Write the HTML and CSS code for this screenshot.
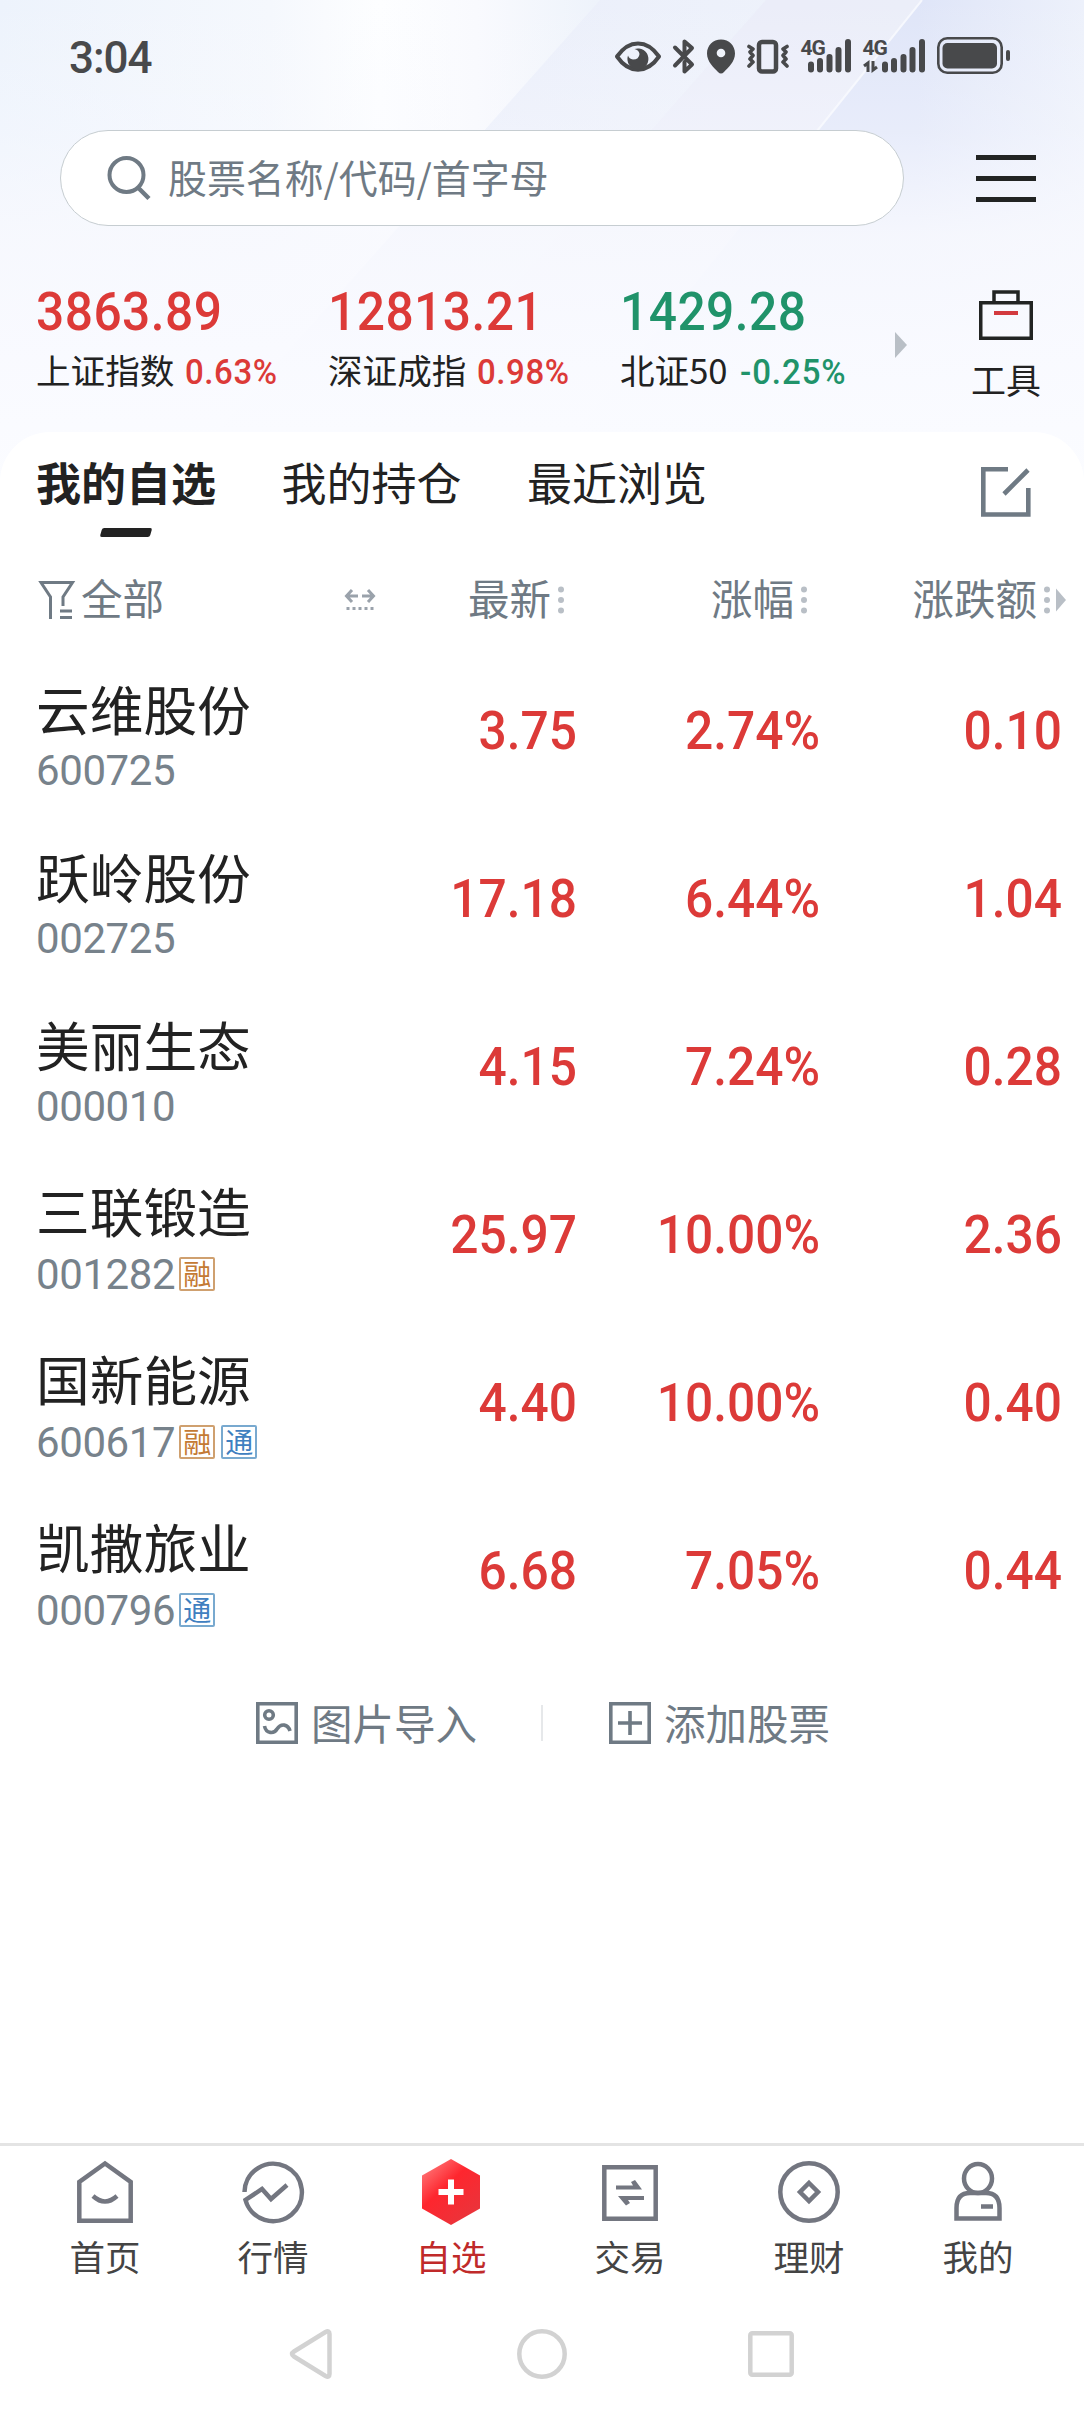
FILE: index.html
```
<!DOCTYPE html>
<html lang="zh-CN">
<head>
    <meta charset="UTF-8">
    <meta name="viewport" content="width=device-width, initial-scale=1.0">
    <title>我的自选</title>
    <link rel="stylesheet" href="styles.css">
</head>
<body>
    <div class="app">
        <header class="header">
            <svg class="header-bg" viewBox="0 0 1084 480" preserveAspectRatio="none">
                <defs>
                    <linearGradient id="base" x1="0" y1="0" x2="1" y2="0">
                        <stop offset="0" stop-color="#edf3fc"/>
                        <stop offset="0.25" stop-color="#f5f8fd"/>
                        <stop offset="0.35" stop-color="#fdfeff"/>
                        <stop offset="0.44" stop-color="#f9fafe"/>
                        <stop offset="0.55" stop-color="#eef3fb"/>
                        <stop offset="1" stop-color="#ebeffb"/>
                    </linearGradient>
                    <linearGradient id="beam" x1="0" y1="0" x2="1" y2="0">
                        <stop offset="0" stop-color="#e7ebf9"/>
                        <stop offset="1" stop-color="#f1f5fc"/>
                    </linearGradient>
                    <linearGradient id="beam2" x1="0" y1="0" x2="1" y2="0">
                        <stop offset="0" stop-color="#dfe5f8"/>
                        <stop offset="0.7" stop-color="#dfe5f8"/>
                        <stop offset="1" stop-color="#edf1fb"/>
                    </linearGradient>
                    <linearGradient id="fade" x1="0" y1="0" x2="0" y2="1">
                        <stop offset="0" stop-color="#f9faff" stop-opacity="0"/>
                        <stop offset="0.27" stop-color="#f9faff" stop-opacity="0.35"/>
                        <stop offset="0.48" stop-color="#f8f9fe" stop-opacity="0.88"/>
                        <stop offset="0.7" stop-color="#f9faff" stop-opacity="0.97"/>
                        <stop offset="1" stop-color="#fbfcff"/>
                    </linearGradient>
                </defs>
                <rect width="1084" height="480" fill="url(#base)"/>
                <path d="M600 0H1084V480H165Z" fill="url(#beam)"/>
                <path d="M766 0H922L530 480H335Z" fill="#e9ebf8" opacity=".7"/>
                <path d="M922 0H1084V480H530Z" fill="url(#beam2)"/>
                <path d="M922 0L814 132" stroke="#f6f8fe" stroke-width="2"/>
                <rect width="1084" height="480" fill="url(#fade)"/>
            </svg>

            <div class="status-bar">
                <span class="time">3:04</span>
                <svg class="status-icons" width="400" height="40" viewBox="612 36 400 40">
                    <!-- eye -->
                    <path d="M617 56.500C629 39 647 39 659 56.500C647 74 629 74 617 56.500Z" fill="none" stroke="#48494b" stroke-width="4" stroke-linejoin="round"/>
                    <path d="M634.500 49A10.500 10.500 0 1 1 628 55.500Q629 59 633 59.500Q639 59.500 639.500 54Q639 50 634.500 49Z" fill="#48494b"/>
                    <!-- bluetooth -->
                    <path d="M675 47.500L692 64.500L684.500 71.500V62M675 65.500L692 48L684.500 41.500V54" fill="none" stroke="#48494b" stroke-width="4" stroke-linecap="round" stroke-linejoin="round"/>
                    <!-- location -->
                    <path d="M721 39.500C713 39.500 707 45.500 707 53.500C707 62 714 67.500 718 72Q721 75 724 72C728 67.500 735 62 735 53.500C735 45.500 729 39.500 721 39.500Z" fill="#48494b"/>
                    <circle cx="721" cy="53" r="4.300" fill="#f0f4fc"/>
                    <!-- vibrate -->
                    <rect x="759" y="42" width="17" height="29.500" rx="3" fill="none" stroke="#48494b" stroke-width="4.500"/>
                    <path d="M749 46.500L753 49L750 52L753 55.500L750 59L753 62L749 66M787 46.500L783 49L786 52L783 55.500L786 59L783 62L787 66" fill="none" stroke="#48494b" stroke-width="3.600" stroke-linecap="round" stroke-linejoin="round"/>
                    <!-- signals -->
                    <text class="net" x="800.500" y="55">4G</text>
                    <path d="M811 64.500V69.500M820 61V69.500M829.500 57V69.500M838.500 50V69.500M848 42V69.500" stroke="#48494b" stroke-width="6" stroke-linecap="round"/>
                    <text class="net" x="862.500" y="55">4G</text>
                    <path d="M864 66L868 63V72M873 61V70L877 67" fill="none" stroke="#48494b" stroke-width="3"/>
                    <path d="M885 64.500V69.500M894 61V69.500M903.500 57V69.500M912.500 50V69.500M922 42V69.500" stroke="#48494b" stroke-width="6" stroke-linecap="round"/>
                    <!-- battery -->
                    <rect x="938.300" y="38.300" width="63.400" height="34.400" rx="9" fill="none" stroke="#48494b" stroke-width="2.600"/>
                    <rect x="942.500" y="43" width="54.500" height="25.500" rx="5" fill="#48494b"/>
                    <rect x="1006" y="50" width="4" height="11" rx="2" fill="#48494b"/>
                </svg>
            </div>

            <div class="search-row">
                <div class="search-box">
                    <svg width="46" height="46" viewBox="106 155 46 46" fill="none" stroke="#6f7a84">
                        <circle cx="126.500" cy="175" r="17" stroke-width="4"/>
                        <path d="M138 187.500L149 198.500" stroke-width="4.500"/>
                    </svg>
                    <span class="placeholder">股票名称/代码/首字母</span>
                </div>
                <div class="menu"><i></i><i></i><i></i></div>
            </div>

            <div class="indexes">
                <div class="index up">
                    <div class="index-value">3863.89</div>
                    <div class="index-name">上证指数 <span class="index-rate">0.63%</span></div>
                </div>
                <div class="index up">
                    <div class="index-value">12813.21</div>
                    <div class="index-name">深证成指 <span class="index-rate">0.98%</span></div>
                </div>
                <div class="index down">
                    <div class="index-value">1429.28</div>
                    <div class="index-name">北证50 <span class="index-rate">-0.25%</span></div>
                </div>
                <svg class="index-more" width="12" height="26" viewBox="0 0 12 26"><path d="M0 0L12 13L0 26Z" fill="#b9bfc6"/></svg>
                <div class="tools">
                    <svg width="54" height="50" viewBox="0 0 54 50" fill="none" stroke="#222423" stroke-width="3.500">
                        <path d="M1.750 12.750H52.250V48.250H1.750ZM15 12V2H39V12"/>
                        <path d="M15 23H39" stroke="#d33a3f" stroke-width="4"/>
                    </svg>
                    <span>工具</span>
                </div>
            </div>
        </header>

        <main class="panel">
            <div class="tabs">
                <div class="tab active">我的自选</div>
                <div class="tab">我的持仓</div>
                <div class="tab">最近浏览</div>
                <svg class="edit" width="50" height="50" viewBox="0 0 50 50" fill="none" stroke="#6f7a84" stroke-width="4.600">
                    <path d="M27 2.300H2.300V47.500H47.300V21M47 3L23 27"/>
                </svg>
            </div>

            <div class="row head">
                <div class="filter">
                    <svg width="40" height="40" viewBox="36 581 40 40" fill="none" stroke="#6f7a84" stroke-width="3">
                        <path d="M50.500 620V598L41 583.500H72.500L63 598V607"/>
                        <path d="M60 612H72M60 618.500H72"/>
                    </svg>
                    <span>全部</span>
                    <svg class="resize" width="32" height="24" viewBox="344 589 32 24" fill="none" stroke="#9aa2ab" stroke-width="3">
                        <path d="M358 597H347M352 591L346.500 597L352 603M362 597H373M368 591L373.500 597L368 603"/>
                        <path d="M346.500 609.500H375" stroke-dasharray="3 3"/>
                    </svg>
                </div>
                <div class="cell"><span>最新</span><svg class="dots" width="6" height="28" viewBox="0 0 6 28"><circle cx="3" cy="3.500" r="3"/><circle cx="3" cy="14" r="3"/><circle cx="3" cy="24.500" r="3"/></svg></div>
                <div class="cell"><span>涨幅</span><svg class="dots" width="6" height="28" viewBox="0 0 6 28"><circle cx="3" cy="3.500" r="3"/><circle cx="3" cy="14" r="3"/><circle cx="3" cy="24.500" r="3"/></svg></div>
                <div class="cell last"><span>涨跌额</span><svg class="dots" width="6" height="28" viewBox="0 0 6 28"><circle cx="3" cy="3.500" r="3"/><circle cx="3" cy="14" r="3"/><circle cx="3" cy="24.500" r="3"/></svg><svg class="more" width="10" height="24" viewBox="0 0 10 24"><path d="M0 0.500L10 12L0 23.500Z"/></svg></div>
            </div>

            <div class="row">
                <div class="stock"><div class="name">云维股份</div><div class="code">600725</div></div>
                <div class="num">3.75</div><div class="num">2.74%</div><div class="num">0.10</div>
            </div>
            <div class="row">
                <div class="stock"><div class="name">跃岭股份</div><div class="code">002725</div></div>
                <div class="num">17.18</div><div class="num">6.44%</div><div class="num">1.04</div>
            </div>
            <div class="row">
                <div class="stock"><div class="name">美丽生态</div><div class="code">000010</div></div>
                <div class="num">4.15</div><div class="num">7.24%</div><div class="num">0.28</div>
            </div>
            <div class="row tagged">
                <div class="stock"><div class="name">三联锻造</div><div class="code">001282<span class="tag rong">融</span></div></div>
                <div class="num">25.97</div><div class="num">10.00%</div><div class="num">2.36</div>
            </div>
            <div class="row tagged">
                <div class="stock"><div class="name">国新能源</div><div class="code">600617<span class="tag rong">融</span><span class="tag tong">通</span></div></div>
                <div class="num">4.40</div><div class="num">10.00%</div><div class="num">0.40</div>
            </div>
            <div class="row tagged">
                <div class="stock"><div class="name">凯撒旅业</div><div class="code">000796<span class="tag tong">通</span></div></div>
                <div class="num">6.68</div><div class="num">7.05%</div><div class="num">0.44</div>
            </div>

            <div class="actions">
                <div class="action">
                    <svg width="42" height="42" viewBox="0 0 42 42" fill="none" stroke="#6f7a84" stroke-width="3.600">
                        <path d="M1.800 1.800H40.200V40.200H1.800Z"/>
                        <circle cx="13" cy="13" r="4.300"/>
                        <path d="M8.500 24C10 32 18 32 21 27C25 21 32 22 34 29"/>
                    </svg>
                    <span>图片导入</span>
                </div>
                <div class="action-line"></div>
                <div class="action">
                    <svg width="42" height="42" viewBox="0 0 42 42" fill="none" stroke="#6f7a84" stroke-width="3.600">
                        <path d="M1.800 1.800H40.200V40.200H1.800ZM9 21H33M21 9V33"/>
                    </svg>
                    <span>添加股票</span>
                </div>
            </div>
        </main>

        <nav class="navbar">
            <div class="nav-item">
                <svg width="66" height="66" viewBox="-33 -33 66 66">
                    <path d="M-25.700 28.700V-10L0 -28.500L25.700 -10V28.700Z"/>
                    <path d="M-12 4Q0 15 12 4"/>
                </svg>
                <span>首页</span>
            </div>
            <div class="nav-item">
                <svg width="66" height="66" viewBox="-33 -33 66 66">
                    <path d="M-28.500 0A28.700 28.700 0 1 1 -27.500 8L-11 -3L-2 7L14 -7"/>
                </svg>
                <span>行情</span>
            </div>
            <div class="nav-item active">
                <svg width="66" height="66" viewBox="-33 -33 66 66">
                    <defs>
                        <linearGradient id="hex" x1="0" y1="0" x2="0.800" y2="1">
                            <stop offset="0" stop-color="#ff8a8a"/>
                            <stop offset="0.450" stop-color="#fe262e"/>
                            <stop offset="1" stop-color="#e8353c"/>
                        </linearGradient>
                    </defs>
                    <path class="hex" d="M0 -33L29 -16.500V16.500L0 33L-29 16.500V-16.500Z"/>
                    <path class="plus" d="M0 -12.500V12.500M-12.500 0H12.500"/>
                </svg>
                <span>自选</span>
            </div>
            <div class="nav-item">
                <svg width="66" height="66" viewBox="-33 -33 66 66">
                    <path d="M-25.700 -24.700H25.700V26.700H-25.700Z"/>
                    <path class="solid" d="M-14 -6.500H3L1 -10L5 -12L12 -2.500H-14ZM14 8H-2L0 11L-4 13.500L-12 4H14Z"/>
                </svg>
                <span>交易</span>
            </div>
            <div class="nav-item">
                <svg width="66" height="66" viewBox="-33 -33 66 66">
                    <circle r="28.700"/>
                    <path d="M0 -9L9 0L0 9L-9 0Z"/>
                </svg>
                <span>理财</span>
            </div>
            <div class="nav-item">
                <svg width="66" height="66" viewBox="-33 -33 66 66">
                    <ellipse cx="0" cy="-13.500" rx="14" ry="14.500"/>
                    <path d="M-21.500 26.500V16Q-21.500 1 -8 1H8Q21.500 1 21.500 16V26.500Z"/>
                    <path d="M3 14.500H15"/>
                </svg>
                <span>我的</span>
            </div>
        </nav>

        <div class="system-nav">
            <svg width="50" height="50" viewBox="0 0 50 50"><path d="M6 22.500Q2 25 6 27.500L37.500 47Q41.500 49 41.500 45V5Q41.500 1 37.500 3Z"/></svg>
            <svg width="50" height="50" viewBox="0 0 50 50"><circle cx="25" cy="25" r="22.700"/></svg>
            <svg width="50" height="50" viewBox="0 0 50 50"><rect x="4.300" y="4.300" width="41.400" height="41.400" rx="2"/></svg>
        </div>
    </div>
</body>
</html>
```

FILE: styles.css
```
* {
    box-sizing: border-box;
}

body {
    margin: 0;
    background: #fff;
    color: #222;
    font-family: "Noto Sans CJK SC", sans-serif;
}

svg {
    display: block;
    flex: none;
}

.app {
    width: 1084px;
    height: 2412px;
    display: flex;
    flex-direction: column;
    overflow: hidden;
}

/* Header */
.header {
    position: relative;
    height: 432px;
    flex: none;
}

.header-bg {
    position: absolute;
    top: 0;
    left: 0;
    width: 1084px;
    height: 490px;
    z-index: -1;
}

.status-bar {
    display: flex;
    justify-content: space-between;
    padding: 36px 72px 0 69px;
    height: 130px;
}

.time {
    font-family: Roboto, sans-serif;
    font-size: 44px;
    line-height: 44px;
    letter-spacing: -1px;
    font-weight: 500;
    color: #48494b;
}

.net {
    font-family: Roboto, sans-serif;
    font-size: 21px;
    font-weight: 700;
    letter-spacing: -1px;
    fill: #48494b;
}

.search-row {
    display: flex;
    align-items: center;
    justify-content: space-between;
    height: 96px;
    padding: 0 48px 0 60px;
}

.search-box {
    display: flex;
    align-items: center;
    width: 844px;
    height: 96px;
    padding-left: 45px;
    border: 1px solid #c6cdd1;
    border-radius: 48px;
    background: #fff;
}

.placeholder {
    margin: 0 0 4px 16px;
    font-size: 38.900px;
    line-height: 56px;
    color: #6f7a84;
}

.menu {
    display: flex;
    flex-direction: column;
    gap: 16px;
    width: 60px;
}

.menu i {
    height: 5px;
    background: #222423;
}

.indexes {
    display: flex;
    padding: 56px 44px 0 36px;
}

.index {
    width: 292px;
    white-space: nowrap;
}

/* Quotes use a slightly condensed face */
.index-value,
.num {
    font-family: Roboto, sans-serif;
    font-size: 54px;
    line-height: 60px;
    font-weight: 500;
    letter-spacing: 0.500px;
    transform: scaleX(0.92);
    transform-origin: left;
}

.index-name {
    font-size: 34.600px;
    line-height: 52px;
    margin-top: 1px;
}

.index-rate {
    display: inline-block;
    margin-left: 3px;
    font-family: Roboto, sans-serif;
    font-size: 35.500px;
    font-weight: 500;
    letter-spacing: 0.600px;
    transform: scaleX(0.93);
    transform-origin: left;
}

.up .index-value,
.up .index-rate {
    color: #dc3a38;
}

.down .index-value,
.down .index-rate {
    color: #20936a;
}

.down .index-rate {
    margin-left: 5px;
    letter-spacing: 1px;
}

.index-more {
    margin: 50px 0 0 -17px;
}

.tools {
    display: flex;
    flex-direction: column;
    align-items: center;
    margin: 8px -1px 0 auto;
    font-size: 35px;
    line-height: 44px;
}

.tools span {
    margin-top: 17px;
}

/* Watch list */
.panel {
    background: #fff;
    border-radius: 50px 50px 0 0;
    flex: 1;
}

.tabs {
    display: flex;
    gap: 65.500px;
    height: 126px;
    padding: 20px 53px 0 36px;
    font-size: 45px;
    line-height: 60px;
}

.tab.active {
    font-weight: 700;
}

.tab.active::after {
    content: "";
    display: block;
    width: 50px;
    height: 9px;
    margin: 16px auto 0;
    border-radius: 2px;
    background: #222;
    transform: skewX(-16deg);
}

.edit {
    margin: 15px 0 0 auto;
}

.row {
    display: grid;
    grid-template-columns: 302px 237px 243px 242px;
    align-items: center;
    height: 168px;
    padding-left: 36px;
}

.head {
    height: 88px;
    padding-bottom: 4px;
    font-size: 41.500px;
    line-height: 60px;
    color: #6f7a84;
}

.filter,
.cell {
    display: flex;
    align-items: center;
    white-space: nowrap;
}

.filter span,
.cell span {
    margin-bottom: 7px;
}

.filter span {
    margin-left: 5px;
}

.resize {
    margin-left: 180px;
}

.cell {
    justify-content: flex-end;
    margin-right: 11px;
}

.cell.last {
    margin-right: -6px;
}

.dots {
    margin-left: 7px;
    fill: #b9bfc6;
}

.more {
    margin-left: 6px;
    fill: #b9bfc6;
}

.stock {
    padding-top: 11px;
}

.name {
    font-size: 53.700px;
    line-height: 64px;
}

.code {
    display: flex;
    align-items: center;
    margin-top: 6px;
    height: 50px;
    font-family: Roboto, sans-serif;
    font-size: 42px;
    font-weight: 400;
    letter-spacing: -0.400px;
    color: #77828b;
}

.tagged .name {
    margin-top: -2px;
    margin-bottom: 8px;
}

.tag {
    width: 36px;
    height: 34px;
    margin: 0 0 2px 4px;
    border: 2px solid;
    border-radius: 2px;
    font-family: "Noto Sans CJK SC", sans-serif;
    font-size: 28px;
    font-weight: 400;
    line-height: 28px;
    letter-spacing: 0;
    text-align: center;
}

.tag + .tag {
    margin-left: 6px;
}

.rong {
    color: #c47a33;
    border-color: #cfa06f;
}

.tong {
    color: #3f80c0;
    border-color: #78a9cf;
}

.num {
    margin-right: -2px;
    padding-top: 2px;
    text-align: right;
    letter-spacing: 0;
    transform-origin: right;
    color: #dc3a38;
}

.actions {
    display: flex;
    align-items: center;
    height: 138px;
    padding-left: 256px;
    font-size: 41.500px;
    line-height: 60px;
    color: #6f7a84;
}

.action {
    display: flex;
    align-items: center;
    gap: 13px;
}

.action span {
    margin-bottom: 3px;
}

.action-line {
    width: 2px;
    height: 36px;
    margin: 0 66px 0 64px;
    background: #e6e8ea;
}

/* Bottom navigation */
.navbar {
    display: grid;
    grid-template-columns: 168px 168px 188px 170px 188px 150px;
    height: 165px;
    flex: none;
    padding: 13px 0 0 21px;
    border-top: 3px solid #e4e4e4;
}

.nav-item {
    display: flex;
    flex-direction: column;
    align-items: center;
    font-size: 35.500px;
    line-height: 50px;
    color: #444;
}

.nav-item svg {
    fill: none;
    stroke: #737680;
    stroke-width: 4.500;
}

.nav-item span {
    margin-top: 6px;
}

.nav-item .solid {
    fill: #737680;
    stroke: none;
}

.nav-item .hex {
    fill: url(#hex);
    stroke: none;
}

.nav-item .plus {
    stroke: #fff;
    stroke-width: 6;
}

.nav-item.active {
    color: #c02a2a;
}

.system-nav {
    display: flex;
    justify-content: center;
    gap: 179px;
    height: 104px;
    flex: none;
    padding-top: 21px;
}

.system-nav svg {
    fill: none;
    stroke: #d2d2d2;
    stroke-width: 4.500;
}
```
